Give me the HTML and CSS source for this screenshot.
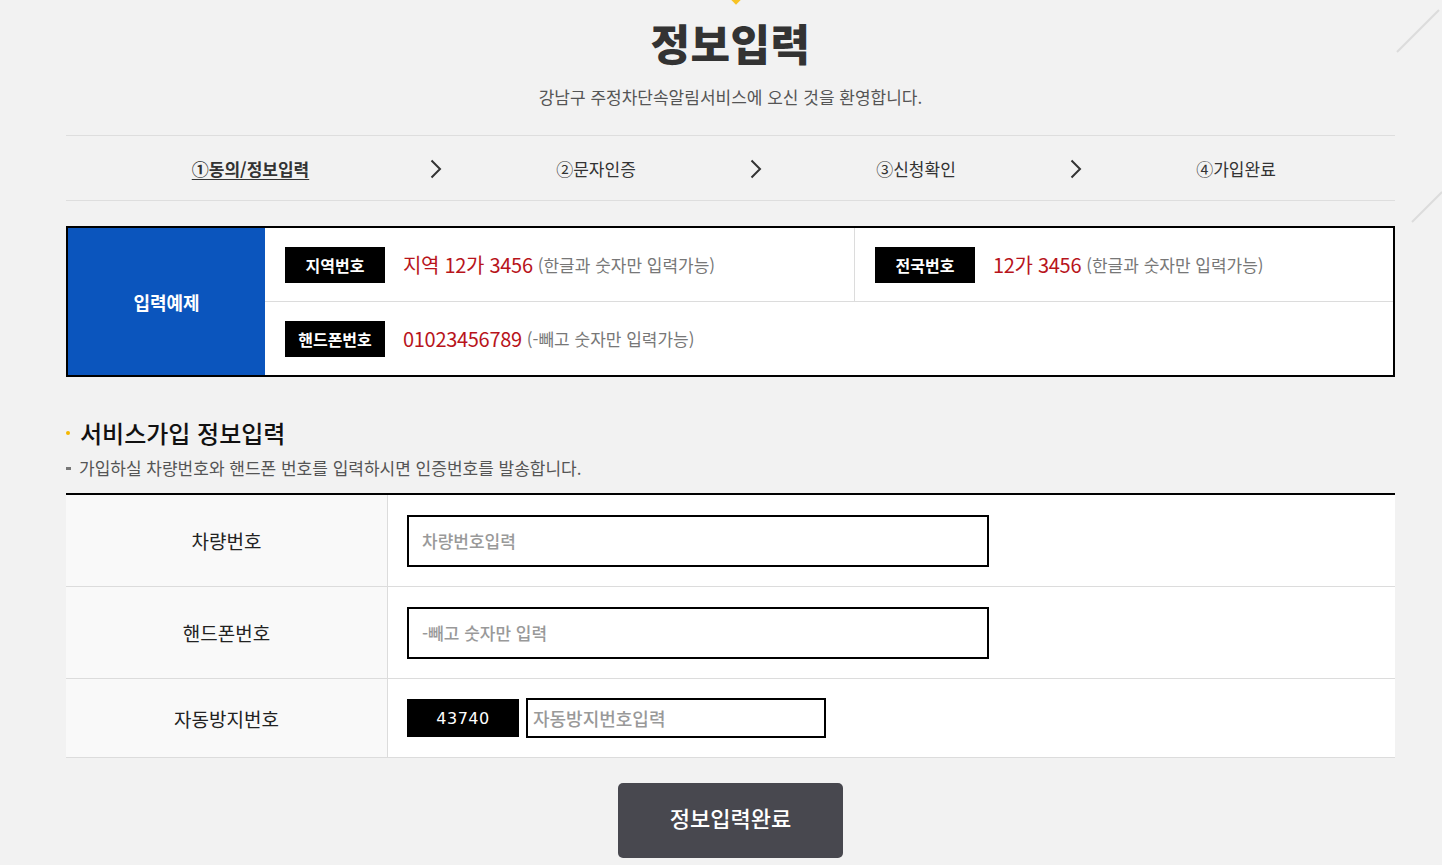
FILE: index.html
```html
<!DOCTYPE html>
<html lang="ko">
<head>
<meta charset="utf-8">
<title>정보입력</title>
<link rel="stylesheet" href="styles.css">
</head>
<body>
<span class="top-mark"></span>
<svg class="deco" width="50" height="230" viewBox="0 0 50 230" aria-hidden="true">
  <line x1="5" y1="52" x2="47" y2="10" stroke="#dcdcdc" stroke-width="2"/>
  <line x1="20" y1="222" x2="50" y2="192" stroke="#dcdcdc" stroke-width="2"/>
</svg>
<div class="wrap">
  <h1 class="title">정보입력</h1>
  <p class="subtitle">강남구 주정차단속알림서비스에 오신 것을 환영합니다.</p>

  <ol class="steps">
    <li class="step step-first current">①동의/정보입력</li>
    <li class="chev"><svg width="12" height="20" viewBox="0 0 12 20"><polyline points="1.5,1.5 10,10 1.5,18.5" fill="none" stroke="#333" stroke-width="2"/></svg></li>
    <li class="step">②문자인증</li>
    <li class="chev"><svg width="12" height="20" viewBox="0 0 12 20"><polyline points="1.5,1.5 10,10 1.5,18.5" fill="none" stroke="#333" stroke-width="2"/></svg></li>
    <li class="step">③신청확인</li>
    <li class="chev"><svg width="12" height="20" viewBox="0 0 12 20"><polyline points="1.5,1.5 10,10 1.5,18.5" fill="none" stroke="#333" stroke-width="2"/></svg></li>
    <li class="step">④가입완료</li>
  </ol>

  <div class="example">
    <div class="example-head">입력예제</div>
    <div class="example-body">
      <div class="ex-row">
        <div class="ex-cell ex-cell-a">
          <span class="tag">지역번호</span>
          <span class="red">지역 12가 3456</span>
          <span class="note">(한글과 숫자만 입력가능)</span>
        </div>
        <div class="ex-cell ex-cell-b">
          <span class="tag">전국번호</span>
          <span class="red">12가 3456</span>
          <span class="note">(한글과 숫자만 입력가능)</span>
        </div>
      </div>
      <div class="ex-row ex-row-last">
        <div class="ex-cell">
          <span class="tag">핸드폰번호</span>
          <span class="red">01023456789</span>
          <span class="note">(-빼고 숫자만 입력가능)</span>
        </div>
      </div>
    </div>
  </div>

  <h2 class="sec-title">서비스가입 정보입력</h2>
  <p class="sec-desc">가입하실 차량번호와 핸드폰 번호를 입력하시면 인증번호를 발송합니다.</p>

  <div class="form">
    <div class="form-row">
      <div class="form-th">차량번호</div>
      <div class="form-td"><input class="field" type="text" placeholder="차량번호입력"></div>
    </div>
    <div class="form-row">
      <div class="form-th">핸드폰번호</div>
      <div class="form-td"><input class="field" type="text" placeholder="-빼고 숫자만 입력"></div>
    </div>
    <div class="form-row form-row-short">
      <div class="form-th">자동방지번호</div>
      <div class="form-td">
        <span class="captcha">43740</span>
        <input class="field field-small" type="text" placeholder="자동방지번호입력">
      </div>
    </div>
  </div>

  <div class="btn-area">
    <button class="btn" type="button">정보입력완료</button>
  </div>
</div>
</body>
</html>
```

FILE: styles.css
```css
* { box-sizing: border-box; }
html, body { margin: 0; padding: 0; }
body {
  background: #f2f2f2;
  font-family: "Noto Sans CJK KR", "Noto Sans", sans-serif;
  color: #333;
  position: relative;
  min-height: 865px;
  overflow: hidden;
}
.top-mark {
  position: absolute;
  left: 732px;
  top: -5px;
  width: 8px;
  height: 8px;
  background: #f7c325;
  transform: rotate(45deg);
}
.deco {
  position: absolute;
  right: 0;
  top: 0;
}
.wrap {
  width: 1329px;
  margin-left: 66px;
}
.title {
  margin: 17px 0 0;
  height: 50px;
  font-size: 43px;
  line-height: 50px;
  font-weight: 900;
  color: #333;
  text-align: center;
  letter-spacing: 0.5px;
}
.subtitle {
  margin: 18px 0 0;
  font-size: 17px;
  line-height: 24px;
  color: #555;
  text-align: center;
}
.steps {
  list-style: none;
  margin: 26px 0 0;
  padding: 0 0 0 39px;
  height: 66px;
  border-top: 1px solid #dedede;
  border-bottom: 1px solid #dedede;
  display: grid;
  grid-template-columns: 291px 20px 240px 20px 240px 20px 240px;
  column-gap: 30px;
  align-items: center;
}
.step {
  text-align: center;
  font-size: 17px;
  color: #333;
}
.step.current {
  font-weight: 700;
  text-decoration: underline;
  text-underline-offset: 3px;
}
.chev {
  display: flex;
  justify-content: center;
  align-items: center;
  padding-top: 2px;
}
.example {
  margin-top: 25px;
  border: 2px solid #000;
  display: flex;
  height: 151px;
  background: #fff;
}
.example-head {
  width: 197px;
  background: #0b55bd;
  color: #fff;
  font-size: 18px;
  font-weight: 700;
  display: flex;
  align-items: center;
  justify-content: center;
}
.example-body {
  flex: 1;
  display: flex;
  flex-direction: column;
}
.ex-row {
  display: flex;
  height: 74px;
  border-bottom: 1px solid #dcdcdc;
}
.ex-row-last {
  border-bottom: 0;
  height: 73px;
}
.ex-cell {
  display: flex;
  align-items: center;
  padding-left: 20px;
}
.ex-cell-a {
  width: 590px;
  border-right: 1px solid #dcdcdc;
}
.ex-cell-b { flex: 1; }
.tag {
  width: 100px;
  height: 36px;
  background: #000;
  color: #fff;
  font-size: 16px;
  font-weight: 700;
  display: flex;
  align-items: center;
  justify-content: center;
  margin-right: 18px;
}
.red {
  color: #b8141b;
  font-size: 20px;
  margin-right: 5px;
  letter-spacing: -0.3px;
}
.note {
  color: #777;
  font-size: 17px;
  letter-spacing: 0;
}
.sec-title {
  margin: 40px 0 0;
  font-size: 24px;
  line-height: 32px;
  font-weight: 500;
  color: #111;
  padding-left: 14px;
  position: relative;
}
.sec-title::before {
  content: "";
  position: absolute;
  left: 0;
  top: 14px;
  width: 4px;
  height: 4px;
  border-radius: 50%;
  background: #f5b800;
}
.sec-desc {
  margin: 7px 0 0;
  font-size: 17px;
  line-height: 24px;
  color: #555;
  padding-left: 13px;
  position: relative;
}
.sec-desc::before {
  content: "";
  position: absolute;
  left: 0;
  top: 11px;
  width: 5px;
  height: 3px;
  background: #777;
}
.form {
  margin-top: 13px;
  border-top: 2px solid #000;
}
.form-row {
  display: flex;
  height: 92px;
  border-bottom: 1px solid #dcdcdc;
}
.form-row-short { height: 79px; }
.form-th {
  width: 322px;
  background: #f9f9f9;
  border-right: 1px solid #dcdcdc;
  display: flex;
  align-items: center;
  justify-content: center;
  font-size: 19px;
  color: #222;
}
.form-td {
  flex: 1;
  background: #fff;
  display: flex;
  align-items: center;
  padding-left: 19px;
}
.field {
  width: 582px;
  height: 52px;
  border: 2px solid #000;
  background: #fff;
  padding: 0 0 0 13px;
  font-family: "Noto Sans CJK KR", "Noto Sans", sans-serif;
  font-size: 17px;
  outline: none;
}
.field::placeholder {
  color: #999;
  font-weight: 500;
}
.captcha {
  width: 112px;
  height: 38px;
  background: #000;
  color: #fff;
  font-family: "DejaVu Sans", sans-serif;
  font-size: 16px;
  letter-spacing: 0.5px;
  display: flex;
  align-items: center;
  justify-content: center;
  margin-right: 7px;
}
.field-small {
  width: 300px;
  height: 40px;
  padding-left: 5px;
  font-size: 18px;
}
.btn-area {
  display: flex;
  justify-content: center;
  margin-top: 25px;
}
.btn {
  width: 225px;
  height: 75px;
  border: 0;
  border-radius: 5px;
  background: #48484f;
  color: #fff;
  font-family: "Noto Sans CJK KR", "Noto Sans", sans-serif;
  font-size: 22px;
  font-weight: 500;
  padding: 0 0 8px;
  cursor: pointer;
}
```
